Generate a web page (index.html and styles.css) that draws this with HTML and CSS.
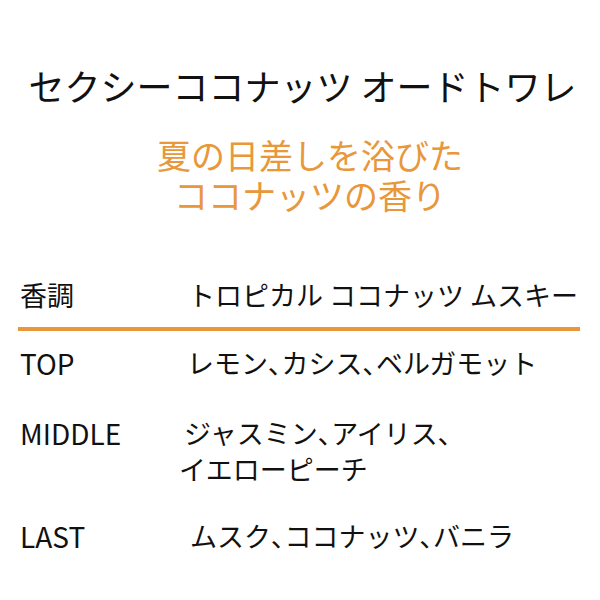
FILE: index.html
```html
<!DOCTYPE html>
<html lang="ja">
<head>
<meta charset="utf-8">
<link rel="stylesheet" href="styles.css">
</head>
<body>
<main class="page">
  <h1 class="title">セクシーココナッツ オードトワレ</h1>
  <p class="catch">夏の日差しを浴びた<br>ココナッツの香り</p>
  <section class="notes">
    <div class="head">
      <span class="label-jp">香調</span>
      <span class="head-value">トロピカル ココナッツ ムスキー</span>
    </div>
    <div class="row row-top">
      <span class="label">TOP</span>
      <span class="value">レモン<span class="p">、</span>カシス<span class="p">、</span>ベルガモット</span>
    </div>
    <div class="row row-middle">
      <span class="label">MIDDLE</span>
      <span class="value value-middle"><span class="l1">ジャスミン<span class="p">、</span>アイリス<span class="p">、</span></span><span class="l2">イエローピーチ</span></span>
    </div>
    <div class="row row-last">
      <span class="label">LAST</span>
      <span class="value value-last">ムスク<span class="p">、</span>ココナッツ<span class="p">、</span>バニラ</span>
    </div>
  </section>
</main>
</body>
</html>
```

FILE: styles.css
```css
html, body {
  margin: 0;
  padding: 0;
  background: #fff;
}
body {
  font-family: "Noto Sans CJK JP", "Noto Sans", sans-serif;
  color: #111;
  width: 600px;
  height: 600px;
  overflow: hidden;
}
.page {
  padding-top: 62px;
}
.title {
  margin: 0;
  font-size: 36px;
  line-height: 46px;
  font-weight: 400;
  text-align: center;
  padding-left: 5px;
}
.catch {
  margin: 27px 0 0;
  font-size: 34px;
  line-height: 40px;
  color: #e8973a;
  text-align: center;
  padding-left: 20px;
}
.notes {
  margin: 62px 20px 0 18px;
}
.head {
  display: grid;
  grid-template-columns: 168px 1fr;
  font-size: 27px;
  line-height: 36px;
  padding: 0 0 14px 2px;
  border-bottom: 4px solid #e8973a;
  white-space: nowrap;
}
.row {
  display: grid;
  grid-template-columns: 167px 1fr;
  line-height: 36px;
  padding-left: 2px;
}
.row-top {
  margin-top: 14px;
}
.row-middle {
  margin-top: 34px;
}
.row-last {
  margin-top: 31px;
}
.label {
  font-size: 28px;
}
.value {
  font-size: 27px;
  white-space: nowrap;
}
.p {
  font-feature-settings: "palt" 1;
}
.value-middle {
  display: flex;
  flex-direction: column;
  margin-left: -3px;
}
.value-middle .l2 {
  margin-left: -5px;
}
.value-last {
  padding-left: 3px;
}
```
